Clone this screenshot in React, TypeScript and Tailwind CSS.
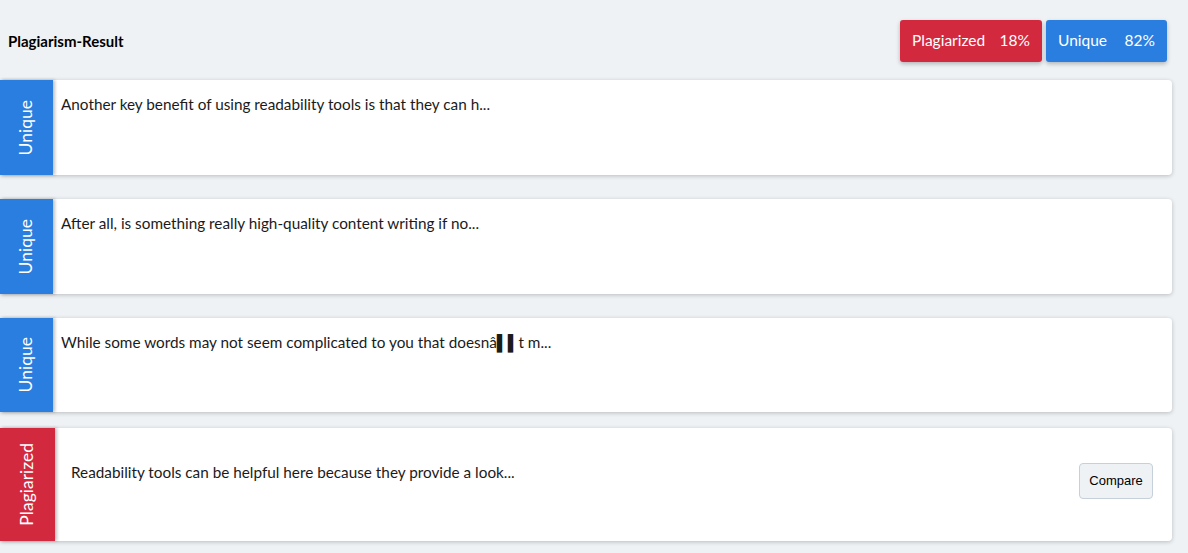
import React from "react";

const rows = [
  { type: "Unique", text: "Another key benefit of using readability tools is that they can h...", h: "h-[95px]" },
  { type: "Unique", text: "After all, is something really high-quality content writing if no...", h: "h-[95px]" },
  { type: "Unique", text: "While some words may not seem complicated to you that doesn\u00e2\u258C\u258Ct m...", h: "h-[94px]" },
];

export default function App() {
  return (
    <div className="min-h-[553px] w-[1188px] bg-[#eef2f5] font-['Lato','Open_Sans',sans-serif] text-[#1b1b1b] overflow-hidden">
      <div className="flex items-center justify-between pl-2 pr-[21px] pt-5 h-[62px]">
        <div className="text-[15px] font-bold text-black">Plagiarism-Result</div>
        <div className="flex gap-1">
          <div className="flex h-[42px] w-[142px] items-center justify-between rounded-[3px] bg-[#d3293e] px-[12px] text-[15.5px] text-white shadow-[0_2px_4px_rgba(0,0,0,0.25)]">
            <span>Plagiarized</span>
            <span>18%</span>
          </div>
          <div className="flex h-[42px] w-[121px] items-center justify-between rounded-[3px] bg-[#2a7ee0] px-[12px] text-[15.5px] text-white shadow-[0_2px_4px_rgba(0,0,0,0.25)]">
            <span>Unique</span>
            <span>82%</span>
          </div>
        </div>
      </div>
      <div className="mt-[18px] flex w-[1172px] flex-col">
        {rows.map((r, i) => (
          <div
            key={i}
            className={`flex ${r.h} mb-6 rounded-r-[4px] bg-white shadow-[0_1px_4px_rgba(0,0,0,0.22)]`}
          >
            <div className="flex w-[53px] shrink-0 items-center justify-center bg-[#2a7ee0] shadow-[2px_0_3px_rgba(0,0,0,0.25)]">
              <span className="rotate-180 text-[17.5px] text-white [writing-mode:vertical-rl]">{r.type}</span>
            </div>
            <div className="pl-2 pt-[14px] text-[15.3px] leading-5">{r.text}</div>
          </div>
        ))}
        <div className="-mt-2 flex h-[113px] items-center rounded-r-[4px] bg-white shadow-[0_1px_4px_rgba(0,0,0,0.22)]">
          <div className="flex h-full w-[55px] shrink-0 items-center justify-center bg-[#d3293e] shadow-[2px_0_3px_rgba(0,0,0,0.25)]">
            <span className="rotate-180 text-[17.5px] text-white [writing-mode:vertical-rl]">Plagiarized</span>
          </div>
          <div className="flex flex-1 items-center justify-between pl-4 pr-[19px]">
            <div className="-mt-6 text-[15.3px]">Readability tools can be helpful here because they provide a look...</div>
            <button className="-mt-2 h-[36px] w-[74px] rounded-[4px] border border-[#c5d0da] bg-[#eef2f5] font-['Liberation_Sans',sans-serif] text-[13px] text-black">
              Compare
            </button>
          </div>
        </div>
      </div>
    </div>
  );
}
